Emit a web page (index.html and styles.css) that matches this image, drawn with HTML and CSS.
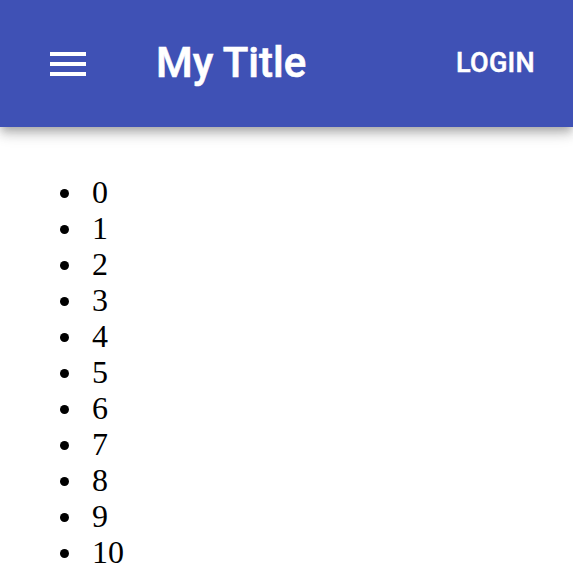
FILE: index.html
```html
<!DOCTYPE html>
<html>
<head>
<meta charset="utf-8">
<link rel="stylesheet" href="styles.css">
</head>
<body>
<header class="appbar">
  <div class="toolbar">
    <button class="menu-btn" aria-label="menu">
      <svg class="menu-icon" viewBox="0 0 24 24" width="48" height="48"><path fill="#fff" d="M3 18h18v-2H3v2zm0-5h18v-2H3v2zm0-7v2h18V6H3z"/></svg>
    </button>
    <h1 class="title">My Title</h1>
    <button class="login">Login</button>
  </div>
</header>
<ul class="list">
  <li>0</li><li>1</li><li>2</li><li>3</li><li>4</li><li>5</li><li>6</li><li>7</li><li>8</li><li>9</li><li>10</li>
</ul>
</body>
</html>
```
FILE: styles.css
```css
html, body {
  margin: 0;
  padding: 0;
  background: #fff;
}
body {
  font-family: "Liberation Serif", "Times New Roman", serif;
}
.appbar {
  background: #3f51b5;
  color: #fff;
  box-shadow: 0 4px 8px -2px rgba(0,0,0,0.2), 0 8px 10px 0 rgba(0,0,0,0.14), 0 2px 20px 0 rgba(0,0,0,0.12);
  position: relative;
}
.toolbar {
  display: flex;
  align-items: center;
  height: 127px;
  padding: 0 38px 0 44px;
}
.menu-btn {
  background: none;
  border: 0;
  padding: 0;
  margin: 0;
  width: 48px;
  height: 48px;
  display: flex;
}
.menu-icon {
  display: block;
}
.title {
  flex: 1;
  margin: -2px 0 0 64px;
  font-family: Roboto, "Liberation Sans", sans-serif;
  font-weight: 500;
  font-size: 42px;
  line-height: 1;
  letter-spacing: 0;
  -webkit-text-stroke: 0.6px #fff;
}
.login {
  background: none;
  border: 0;
  padding: 0;
  color: #fff;
  font-family: Roboto, "Liberation Sans", sans-serif;
  font-weight: 500;
  font-size: 27px;
  line-height: 1;
  text-transform: uppercase;
  letter-spacing: 0.3px;
  -webkit-text-stroke: 0.5px #fff;
}
.list {
  list-style: none;
  margin: 47px 0 0 0;
  padding: 0 0 0 60px;
  font-size: 32px;
  line-height: 36px;
}
.list li {
  display: flex;
  align-items: center;
  gap: 23px;
}
.list li::before {
  content: "";
  width: 9px;
  height: 9px;
  border-radius: 50%;
  background: #000;
  margin-top: 3px;
}
```
